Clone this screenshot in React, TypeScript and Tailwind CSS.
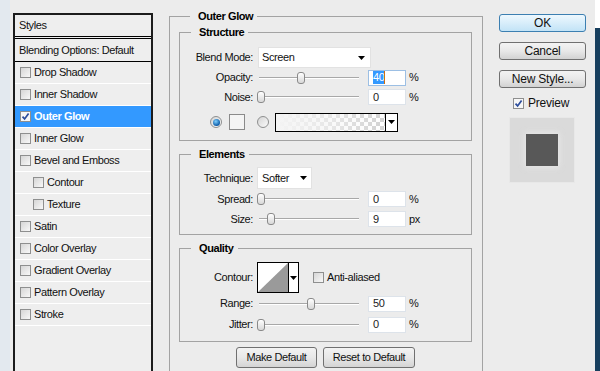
import clsx from "clsx";

const STYLE_ITEMS = [
  { label: "Drop Shadow" },
  { label: "Inner Shadow" },
  { label: "Outer Glow", active: true },
  { label: "Inner Glow" },
  { label: "Bevel and Emboss" },
  { label: "Contour", sub: true },
  { label: "Texture", sub: true },
  { label: "Satin" },
  { label: "Color Overlay" },
  { label: "Gradient Overlay" },
  { label: "Pattern Overlay" },
  { label: "Stroke" },
];

function Arrow() {
  return (
    <svg width="7" height="4" viewBox="0 0 7 4">
      <path d="M0 0h7L3.5 4z" fill="#000" />
    </svg>
  );
}

function Check({ checked = false }: { checked?: boolean }) {
  return (
    <span
      className={clsx(
        "flex h-[11px] w-[11px] shrink-0 items-center justify-center border border-[#8e8f8f]",
        checked ? "bg-[#f7f7f7]" : "bg-linear-to-br from-[#d6d6d6] to-[#f8f8f8]"
      )}
    >
      {checked && (
        <svg width="9" height="9" viewBox="0 0 9 9">
          <path d="M1.5 4.6l2.1 2.3L7.6 1.4" stroke="#2c4d9c" strokeWidth="1.7" fill="none" />
        </svg>
      )}
    </span>
  );
}

function Radio({ on = false }: { on?: boolean }) {
  return (
    <span className="flex h-[12px] w-[12px] shrink-0 items-center justify-center rounded-full border border-[#8e8f8f] bg-linear-to-br from-[#d4d4d4] to-[#fbfbfb]">
      {on && <span className="h-[7px] w-[7px] rounded-full bg-[radial-gradient(circle_at_40%_35%,#7fd0ff,#0b5aa6_70%)]" />}
    </span>
  );
}

function Slider({ at }: { at: number }) {
  return (
    <div className="relative h-[14px] w-[106px]">
      <div className="absolute left-[2px] right-[4px] top-[6px] h-[2px] border-t border-b border-t-[#a8a8a8] border-b-white" />
      <div
        className="absolute top-[1px] h-[12px] w-[8px] rounded-[3px] border border-[#8a8a8a] bg-linear-to-b from-white to-[#d8d8d8]"
        style={{ left: at }}
      />
    </div>
  );
}

function Num({ value, focused = false }: { value: string; focused?: boolean }) {
  return (
    <div
      className={clsx(
        "ml-[5px] flex h-[16px] w-[38px] items-center border bg-white pl-[4px] text-[#222]",
        focused ? "border-[#9cbfe4]" : "border-[#dde3ea]"
      )}
    >
      {focused ? (
        <>
          <span className="bg-[#3399ff] leading-[13px] text-white">{value}</span>
          <span className="h-[13px] w-[1px] bg-[#d07010]" />
        </>
      ) : (
        value
      )}
    </div>
  );
}

function Label({ children }: { children: React.ReactNode }) {
  return <span className="w-[73px] shrink-0 text-right">{children}</span>;
}

function SliderRow({
  label,
  at,
  value,
  unit,
  height,
  focused,
}: {
  label: string;
  at: number;
  value: string;
  unit: string;
  height: string;
  focused?: boolean;
}) {
  return (
    <div className={clsx("flex items-center", height)}>
      <Label>{label}</Label>
      <div className="ml-[4px]">
        <Slider at={at} />
      </div>
      <Num value={value} focused={focused} />
      <span className="ml-[3px]">{unit}</span>
    </div>
  );
}

function Group({
  title,
  className,
  children,
}: {
  title: string;
  className?: string;
  children?: React.ReactNode;
}) {
  return (
    <fieldset className={clsx("border border-[#a3a3a3]", className)}>
      <legend className="ml-[11px] pl-[8px] pr-[4px] font-bold leading-[12px] text-black">{title}</legend>
      {children}
    </fieldset>
  );
}

function StylesPanel() {
  return (
    <div className="ml-[3px] mt-[13px] h-[372px] w-[140px] shrink-0 border-2 border-[#1c1c1c] bg-[#eeeeee]">
      <div className="flex h-[21px] items-center pl-[4px]">Styles</div>
      <div className="h-[3px] border-y border-black" />
      <div className="flex h-[23px] items-center border-b border-black pl-[4px]">Blending Options: Default</div>
      {STYLE_ITEMS.map((item) => (
        <div
          key={item.label}
          className={clsx(
            "flex h-[22px] items-center gap-[3px] border-b border-white",
            item.sub ? "pl-[18px]" : "pl-[5px]",
            item.active && "bg-[#3399ff] font-bold text-white"
          )}
        >
          <Check checked={item.active} />
          <span>{item.label}</span>
        </div>
      ))}
    </div>
  );
}

function OuterGlow() {
  return (
    <fieldset className="ml-[16px] mt-[10px] h-[390px] w-[314px] shrink-0 border border-[#a3a3a3] pl-[9px] pr-[10px]">
      <legend className="ml-[11px] pl-[8px] pr-[4px] font-bold leading-[12px] text-black">Outer Glow</legend>

      <Group title="Structure" className="mt-[4px] pb-[3px] pt-[9px]">
        <div className="flex h-[21px] items-center">
          <Label>Blend Mode:</Label>
          <div className="ml-[5px] flex h-[21px] w-[113px] items-center justify-between border border-[#e2e2e2] bg-white pl-[3px] pr-[5px]">
            <span>Screen</span>
            <Arrow />
          </div>
        </div>
        <SliderRow label="Opacity:" at={40} value="40" unit="%" height="h-[19px]" focused />
        <SliderRow label="Noise:" at={0} value="0" unit="%" height="h-[20px]" />
        <div className="flex h-[30px] items-center pl-[30px]">
          <Radio on />
          <span className="ml-[7px] h-[16px] w-[16px] border border-[#8a8a8a] bg-[#f4f4f4]" />
          <span className="ml-[12px]">
            <Radio />
          </span>
          <div className="ml-[6px] flex h-[19px] w-[123px] border border-black">
            <div className="flex-1 bg-[conic-gradient(#d2d2d2_25%,#ffffff_0_50%,#d2d2d2_0_75%,#ffffff_0)] bg-[length:8px_8px]">
              <div className="h-full w-full bg-linear-to-r from-[#f4f4f4] via-[#f4f4f4]/60 to-transparent" />
            </div>
            <div className="flex w-[12px] items-center justify-center border-l border-black bg-white">
              <Arrow />
            </div>
          </div>
        </div>
      </Group>

      <Group title="Elements" className="mt-[7px] pb-[5px] pt-[7px]">
        <div className="flex h-[22px] items-center">
          <Label>Technique:</Label>
          <div className="ml-[4px] flex h-[22px] w-[55px] items-center justify-between border border-[#e2e2e2] bg-white pl-[4px] pr-[4px]">
            <span>Softer</span>
            <Arrow />
          </div>
        </div>
        <SliderRow label="Spread:" at={0} value="0" unit="%" height="h-[20px]" />
        <SliderRow label="Size:" at={10} value="9" unit="px" height="h-[20px]" />
      </Group>

      <Group title="Quality" className="mt-[7px] pb-[6px] pt-[8px]">
        <div className="flex h-[31px] items-center">
          <Label>Contour:</Label>
          <div className="ml-[4px] flex h-[31px] w-[42px] border border-black bg-white">
            <svg width="30" height="29" viewBox="0 0 30 29" className="shrink-0">
              <path d="M0 29L30 0V29Z" fill="#9a9a9a" />
            </svg>
            <div className="flex flex-1 items-center justify-center border-l border-black">
              <Arrow />
            </div>
          </div>
          <span className="ml-[14px]">
            <Check />
          </span>
          <span className="ml-[3px]">Anti-aliased</span>
        </div>
        <SliderRow label="Range:" at={50} value="50" unit="%" height="h-[21px]" />
        <SliderRow label="Jitter:" at={0} value="0" unit="%" height="h-[21px]" />
      </Group>

      <div className="mt-[5px] flex justify-center gap-[6px]">
        <button className="h-[21px] w-[81px] rounded-[3px] border border-[#707070] bg-linear-to-b from-[#f3f3f3] via-[#e8e8e8] to-[#d4d4d4]">
          Make Default
        </button>
        <button className="h-[21px] w-[92px] rounded-[3px] border border-[#707070] bg-linear-to-b from-[#f3f3f3] via-[#e8e8e8] to-[#d4d4d4]">
          Reset to Default
        </button>
      </div>
    </fieldset>
  );
}

function Actions() {
  return (
    <div className="ml-[16px] mt-[14px] flex w-[87px] shrink-0 flex-col text-[12px] tracking-[-0.2px]">
      <button className="h-[18px] rounded-[3px] border border-[#3c7fb1] bg-linear-to-b from-[#eef8fe] to-[#c2e3f6] leading-none">
        OK
      </button>
      <button className="mt-[10px] h-[18px] rounded-[3px] border border-[#707070] bg-linear-to-b from-[#f3f3f3] via-[#e8e8e8] to-[#d2d2d2] leading-none">
        Cancel
      </button>
      <button className="mt-[10px] h-[18px] rounded-[3px] border border-[#707070] bg-linear-to-b from-[#f3f3f3] via-[#e8e8e8] to-[#d2d2d2] leading-none">
        New Style...
      </button>
      <div className="mt-[8px] flex h-[14px] items-center gap-[4px] pl-[14px]">
        <Check checked />
        <span>Preview</span>
      </div>
      <div className="ml-[10px] mt-[7px] flex h-[66px] w-[66px] items-center justify-center border border-[#e8e8e8] bg-[#dadada]">
        <div className="h-[32px] w-[32px] bg-[#585858] shadow-[0_0_5px_2px_rgba(232,232,232,0.7)]" />
      </div>
    </div>
  );
}

export default function App() {
  return (
    <div className="flex h-[371px] w-[600px] items-start overflow-hidden bg-[#ececec] font-['Liberation_Sans',Arial,sans-serif] text-[11px] tracking-[-0.4px] text-[#111]">
      <div className="h-full w-[10px] shrink-0 bg-[#e3e9ef]" />
      <StylesPanel />
      <OuterGlow />
      <Actions />
      <div className="ml-[9px] flex h-full w-[5px] shrink-0 flex-col">
        <div className="h-[28px] bg-white" />
        <div className="flex-1 bg-[#173f5e]" />
      </div>
    </div>
  );
}
